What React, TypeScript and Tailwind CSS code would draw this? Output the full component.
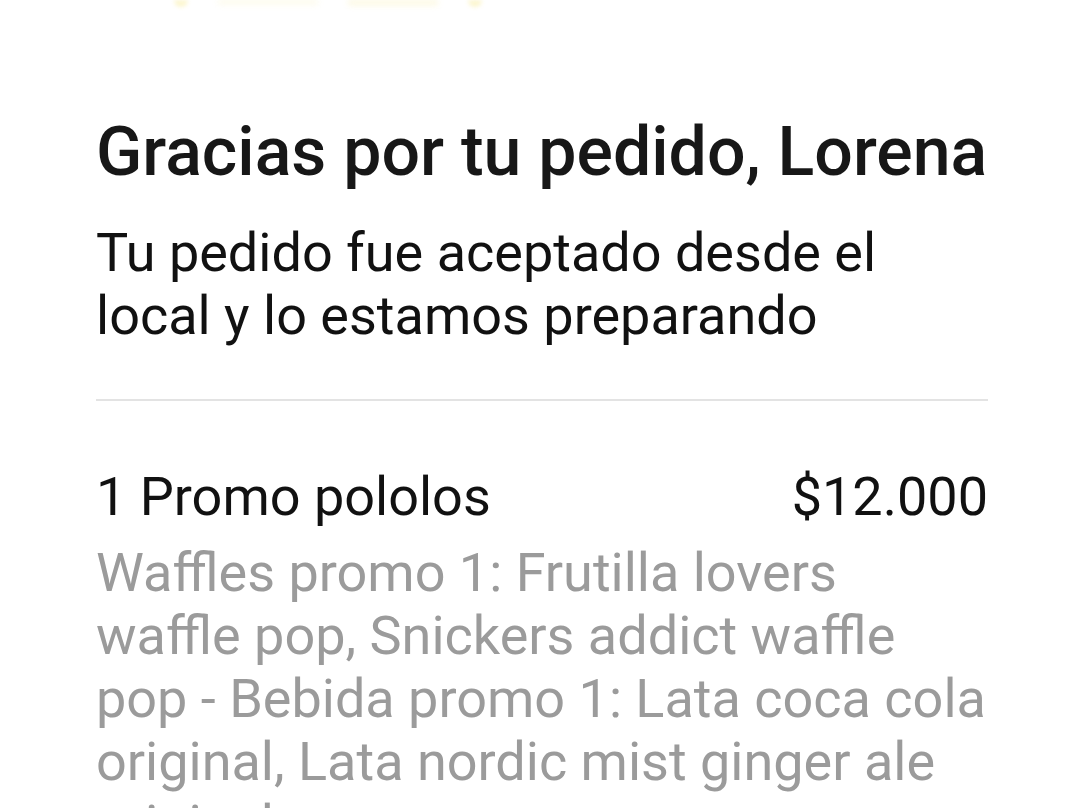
export default function App() {
  return (
    <div
      className="min-h-screen w-[1080px] bg-white overflow-hidden"
      style={{ fontFamily: 'Roboto, "Noto Sans", sans-serif' }}
    >
      {/* faint bottom edge of the logo, cut off above */}
      <div className="h-[12px] flex items-start gap-[30px] pl-[174px] opacity-25">
        <div className="h-[7px] w-[14px] rounded-b-full bg-[#f3dc40] blur-[2px]" />
        <div className="h-[4px] w-[100px] bg-[#f7ec9a] blur-[3px]" />
        <div className="h-[5px] w-[90px] bg-[#f5e57a] blur-[3px]" />
        <div className="h-[7px] w-[14px] rounded-b-full bg-[#f3dc40] blur-[2px]" />
      </div>

      <div className="pl-[96px] pr-[92px]">
        <h1 className="mt-[100px] text-[68px] leading-[80px] font-medium text-[#171717] whitespace-nowrap">
          Gracias por tu pedido, Lorena
        </h1>
        <p className="mt-[29px] text-[54px] leading-[63px] text-[#111]">
          Tu pedido fue aceptado desde el
          <br />
          local y lo estamos preparando
        </p>

        <div className="mt-[52px] h-[2px] bg-[#e3e3e3]" />

        <div className="mt-[64px] flex items-start justify-between">
          <span className="text-[54px] leading-[63px] text-[#111]">1 Promo pololos</span>
          <span className="text-[54px] leading-[63px] text-[#111]">$12.000</span>
        </div>
        <p className="mt-[13px] text-[54px] leading-[63px] text-[#9b9b9b] whitespace-nowrap">
          Waffles promo 1: Frutilla lovers
          <br />
          waffle pop, Snickers addict waffle
          <br />
          pop - Bebida promo 1: Lata coca cola
          <br />
          original, Lata nordic mist ginger ale
          <br />
          original
        </p>
      </div>
    </div>
  );
}
